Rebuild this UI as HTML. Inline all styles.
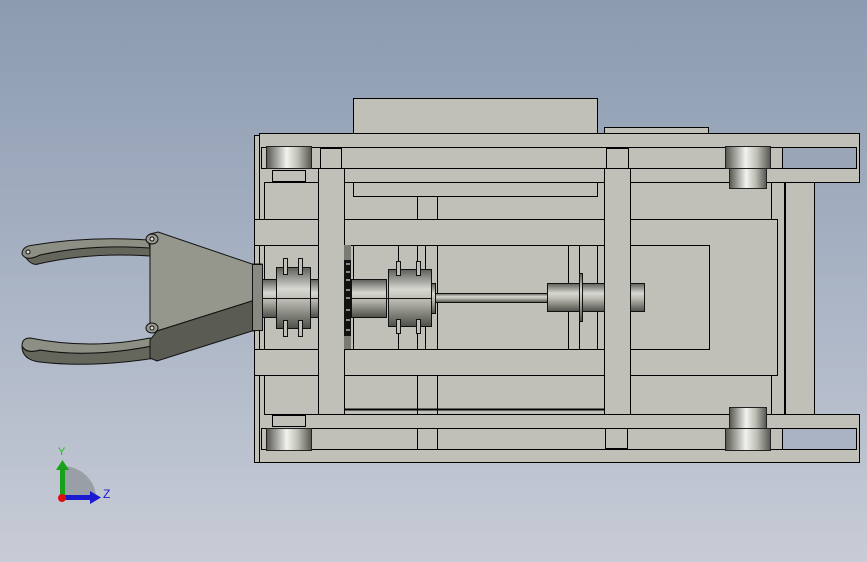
<!DOCTYPE html>
<html><head><style>
html,body{margin:0;padding:0;width:867px;height:562px;overflow:hidden}
body{background:linear-gradient(180deg,#8c9bb0 0%,#a8b3c4 50%,#c8ccd6 100%)}
svg{position:absolute;left:0;top:0}
text{font-family:"Liberation Sans",sans-serif}
</style></head><body>
<svg width="867" height="562" viewBox="0 0 867 562">
<defs>
<linearGradient id="cy" x1="0" y1="0" x2="0" y2="1">
<stop offset="0" stop-color="#5e5f58"/><stop offset="0.35" stop-color="#d8d8d2"/><stop offset="0.55" stop-color="#b8b8b0"/><stop offset="1" stop-color="#4e4f48"/></linearGradient>
<linearGradient id="wh" x1="0" y1="0" x2="1" y2="0">
<stop offset="0" stop-color="#55564f"/><stop offset="0.45" stop-color="#f2f2ee"/><stop offset="0.7" stop-color="#bdbdb5"/><stop offset="1" stop-color="#55564f"/></linearGradient>
</defs>
<g stroke="#000" stroke-width="1" fill="#c0c0b8">
<rect x="353.5" y="98.5" width="244" height="35"/>
<rect x="604.5" y="127.5" width="104" height="6"/>
<rect x="254.5" y="135.5" width="6" height="327"/>
<path d="M259.5 133.5H859.5V182.5H814.5V414.5H859.5V462.5H259.5Z"/>
<rect x="261.5" y="147.5" width="521" height="21"/>
<rect x="782.5" y="147.5" width="74" height="21" fill="#9aa6b8"/>
<rect x="261.5" y="428.5" width="521" height="21"/>
<rect x="782.5" y="428.5" width="74" height="21" fill="#a8b2c3"/>
<rect x="785.5" y="182.5" width="29" height="232"/>
<rect x="771.5" y="182.5" width="13" height="232"/>
<rect x="264.5" y="182.5" width="54" height="232"/>
<rect x="272.5" y="170.5" width="33" height="11"/>
<rect x="272.5" y="415.5" width="33" height="11"/>
<rect x="254.5" y="219.5" width="64" height="26"/>
<rect x="254.5" y="349.5" width="64" height="26"/>
<rect x="318.5" y="168.5" width="26" height="246"/>
<rect x="604.5" y="168.5" width="26" height="246"/>
<rect x="320.5" y="148.5" width="21" height="20"/>
<rect x="606.5" y="148.5" width="22" height="20"/>
<rect x="605.5" y="428.5" width="22" height="20"/>
<rect x="344.5" y="182.5" width="260" height="232"/>
<rect x="353.5" y="182.5" width="244" height="14"/>
<line x1="417.5" y1="196" x2="417.5" y2="414"/><line x1="437.5" y1="196" x2="437.5" y2="414"/>
<line x1="417.5" y1="428" x2="417.5" y2="449"/><line x1="437.5" y1="428" x2="437.5" y2="449"/>
<rect x="344.5" y="219.5" width="260" height="26"/>
<rect x="344.5" y="349.5" width="260" height="26"/>
<line x1="344" y1="409.5" x2="604" y2="409.5" stroke-width="2"/>
<rect x="630.5" y="182.5" width="141" height="232"/>
<rect x="630.5" y="219.5" width="147" height="156"/>
<rect x="630.5" y="245.5" width="79" height="104"/>
<line x1="398.5" y1="245" x2="398.5" y2="349"/><line x1="425.5" y1="245" x2="425.5" y2="349"/>
<line x1="568.5" y1="245" x2="568.5" y2="349"/><line x1="579.5" y1="245" x2="579.5" y2="349"/><line x1="597.5" y1="245" x2="597.5" y2="349"/>
<line x1="353.5" y1="245" x2="353.5" y2="349"/>
</g>
<g stroke="#222" stroke-width="1" fill="url(#wh)">
<rect x="266.5" y="146.5" width="45" height="22"/>
<rect x="266.5" y="428.5" width="45" height="22"/>
<rect x="725.5" y="146.5" width="45" height="22"/>
<rect x="725.5" y="428.5" width="45" height="22"/>
<rect x="729.5" y="168.5" width="37" height="20"/>
<rect x="729.5" y="407.5" width="37" height="21"/>
</g>
<rect x="344" y="245" width="7" height="104" fill="#7a7b74"/>
<rect x="344" y="260" width="7" height="76" fill="#111"/>
<g stroke="#fff" stroke-width="1">
<line x1="346" y1="264" x2="350" y2="264"/><line x1="346" y1="272" x2="350" y2="272"/><line x1="346" y1="280" x2="350" y2="280"/><line x1="346" y1="290" x2="350" y2="290"/><line x1="346" y1="298" x2="350" y2="298"/><line x1="346" y1="310" x2="350" y2="310"/><line x1="346" y1="320" x2="350" y2="320"/><line x1="346" y1="330" x2="350" y2="330"/></g>
<g stroke="#111" stroke-width="1" fill="url(#cy)">
<rect x="262.5" y="279.5" width="56" height="38"/>
<rect x="276.5" y="267.5" width="34" height="61"/>
<rect x="351.5" y="279.5" width="35" height="38"/>
<rect x="388.5" y="269.5" width="43" height="57"/>
<rect x="431.5" y="283.5" width="4" height="30"/>
<rect x="435.5" y="293.5" width="112" height="9"/>
<rect x="547.5" y="283.5" width="57" height="28"/>
<rect x="579.5" y="273.5" width="3" height="48"/>
<rect x="630.5" y="283.5" width="14" height="28"/>
</g>
<g stroke="#111" fill="#c0c0b8">
<rect x="283.5" y="258.5" width="4" height="16"/><rect x="298.5" y="258.5" width="4" height="16"/>
<rect x="283.5" y="320.5" width="4" height="16"/><rect x="298.5" y="320.5" width="4" height="16"/>
<rect x="396.5" y="261.5" width="4" height="14"/><rect x="416.5" y="261.5" width="4" height="14"/>
<rect x="396.5" y="319.5" width="4" height="14"/><rect x="416.5" y="319.5" width="4" height="14"/>
</g>
<line x1="262" y1="298.5" x2="318" y2="298.5" stroke="#111"/>
<line x1="351" y1="298.5" x2="431" y2="298.5" stroke="#111"/>
<g stroke="#111" stroke-width="1">
<path d="M26 258Q32 266 38 264Q90 252 150 256L150 247Q90 244 40 255Z" fill="#65665c"/>
<path d="M22 254Q22 246 34 245Q90 236 148 240L150 248Q90 244 40 255Q26 262 22 254Z" fill="#8e8f84"/>
<path d="M22 346Q26 354 40 350Q90 358 152 346L156 358Q90 368 40 362Q22 360 22 346Z" fill="#65665c"/>
<path d="M22 346Q22 338 30 338Q90 350 150 338L152 346Q90 358 40 350Q26 354 22 346Z" fill="#8e8f84"/>
<path d="M150 234L158 232L252 264L262 264L262 301L252 301L157 331L150 330Z" fill="#96978c"/>
<path d="M157 331L252 301L262 301L262 330L252 331L157 361L150 358L150 340Z" fill="#5a5b53"/>
<rect x="252.5" y="264.5" width="10" height="66" fill="#888980"/>
<ellipse cx="152" cy="239" rx="6" ry="5" fill="#9a9b90"/>
<ellipse cx="152" cy="328" rx="6" ry="5" fill="#9a9b90"/>
<circle cx="152" cy="239" r="2" fill="#ddd"/><circle cx="152" cy="328" r="2" fill="#ddd"/>
<circle cx="28" cy="252" r="2" fill="#ddd"/>
</g>
<path d="M62 498V466A34 32 0 0 1 96 498Z" fill="#8a8e96" opacity="0.7"/>
<rect x="60" y="468" width="5" height="30" fill="#1aa11a"/>
<path d="M56 470L62.5 460L69 470Z" fill="#1aa11a"/>
<rect x="62" y="495" width="30" height="5" fill="#1a1ad0"/>
<path d="M90 491L101 497.5L90 504Z" fill="#1a1ad0"/>
<circle cx="62" cy="498" r="4" fill="#e01010"/>
<text x="58" y="455" font-size="11" fill="#18c018">Y</text>
<text x="103" y="498" font-size="12" fill="#1a1ad0">Z</text>
</svg>
</body></html>
